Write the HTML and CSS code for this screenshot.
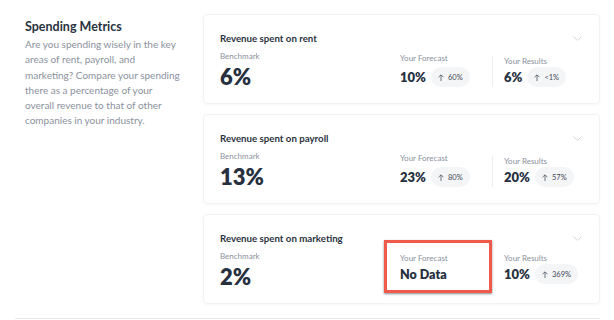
FILE: index.html
```html
<!DOCTYPE html>
<html lang="en">
<head>
  <meta charset="UTF-8">
  <meta name="viewport" content="width=device-width, initial-scale=1.0">
  <title>Spending Metrics</title>
  <link rel="stylesheet" href="styles.css">
</head>
<body>
  <main class="metrics">
    <aside class="intro">
      <h2>Spending Metrics</h2>
      <p>Are you spending wisely in the key areas of rent, payroll, and marketing? Compare your spending there as a percentage of your overall revenue to that of other companies in your industry.</p>
    </aside>

    <section class="cards">
      <div class="card">
        <div class="card-head">
          <h3>Revenue spent on rent</h3>
          <svg class="chevron" width="9" height="5" viewBox="0 0 9 5"><path d="M0.5 0.5 L4.5 4.5 L8.5 0.5" fill="none" stroke="#d3d7dd" stroke-width="1"/></svg>
        </div>
        <div class="card-body">
          <div class="bench">
            <div class="label">Benchmark</div>
            <div class="big">6%</div>
          </div>
          <div class="forecast">
            <div class="label">Your Forecast</div>
            <div class="row"><span class="val">10%</span><span class="pill"><svg width="6" height="7" viewBox="0 0 6 7"><path d="M3 7 V1 M0.6 3.2 L3 0.8 L5.4 3.2" fill="none" stroke="#4a5160" stroke-width="0.8"/></svg>60%</span></div>
          </div>
          <div class="results">
            <div class="label">Your Results</div>
            <div class="row"><span class="val">6%</span><span class="pill"><svg width="6" height="7" viewBox="0 0 6 7"><path d="M3 7 V1 M0.6 3.2 L3 0.8 L5.4 3.2" fill="none" stroke="#4a5160" stroke-width="0.8"/></svg>&lt;1%</span></div>
          </div>
        </div>
      </div>

      <div class="card">
        <div class="card-head">
          <h3>Revenue spent on payroll</h3>
          <svg class="chevron" width="9" height="5" viewBox="0 0 9 5"><path d="M0.5 0.5 L4.5 4.5 L8.5 0.5" fill="none" stroke="#d3d7dd" stroke-width="1"/></svg>
        </div>
        <div class="card-body">
          <div class="bench">
            <div class="label">Benchmark</div>
            <div class="big">13%</div>
          </div>
          <div class="forecast">
            <div class="label">Your Forecast</div>
            <div class="row"><span class="val">23%</span><span class="pill"><svg width="6" height="7" viewBox="0 0 6 7"><path d="M3 7 V1 M0.6 3.2 L3 0.8 L5.4 3.2" fill="none" stroke="#4a5160" stroke-width="0.8"/></svg>80%</span></div>
          </div>
          <div class="results">
            <div class="label">Your Results</div>
            <div class="row"><span class="val">20%</span><span class="pill"><svg width="6" height="7" viewBox="0 0 6 7"><path d="M3 7 V1 M0.6 3.2 L3 0.8 L5.4 3.2" fill="none" stroke="#4a5160" stroke-width="0.8"/></svg>57%</span></div>
          </div>
        </div>
      </div>

      <div class="card">
        <div class="card-head">
          <h3>Revenue spent on marketing</h3>
          <svg class="chevron" width="9" height="5" viewBox="0 0 9 5"><path d="M0.5 0.5 L4.5 4.5 L8.5 0.5" fill="none" stroke="#d3d7dd" stroke-width="1"/></svg>
        </div>
        <div class="card-body">
          <div class="bench">
            <div class="label">Benchmark</div>
            <div class="big">2%</div>
          </div>
          <div class="forecast highlight">
            <div class="label">Your Forecast</div>
            <div class="row"><span class="val nodata">No Data</span></div>
          </div>
          <div class="results no-divider">
            <div class="label">Your Results</div>
            <div class="row"><span class="val">10%</span><span class="pill"><svg width="6" height="7" viewBox="0 0 6 7"><path d="M3 7 V1 M0.6 3.2 L3 0.8 L5.4 3.2" fill="none" stroke="#4a5160" stroke-width="0.8"/></svg>369%</span></div>
          </div>
        </div>
      </div>
    </section>
  </main>
  <hr class="rule">
</body>
</html>
```

FILE: styles.css
```css
body {
  margin: 0;
  background-color: #ffffff;
  color: #293241;
  font-family: Lato, "Noto Sans", sans-serif;
}
.metrics {
  display: grid;
  grid-template-columns: 157px 397px;
  column-gap: 21px;
  padding: 14px 0 0 25px;
}
.intro h2 {
  margin: 5px 0 0;
  font-size: 12.5px;
  font-weight: 700;
  line-height: 15px;
  color: #293241;
}
.intro p {
  margin: 3px 0 0;
  font-size: 10px;
  line-height: 15.3px;
  color: #8b919d;
}
.cards {
  display: flex;
  flex-direction: column;
  gap: 10px;
}
.card {
  height: 90px;
  box-sizing: border-box;
  border: 1px solid #f1f2f4;
  border-radius: 4px;
  box-shadow: 0 1px 3px rgba(0, 0, 0, 0.04);
  padding: 17px 14px 0 16px;
}
.card-head {
  display: flex;
  justify-content: space-between;
  align-items: center;
  height: 12px;
}
.card-head h3 {
  margin: 0;
  font-size: 9.7px;
  font-weight: 700;
  color: #2b3240;
}
.chevron {
  margin-right: 3px;
}
.card-body {
  display: flex;
  align-items: flex-start;
}
.label {
  font-size: 8px;
  line-height: 11px;
  color: #8a909c;
}
.bench {
  flex: 1;
  margin-top: 7px;
}
.big {
  margin-top: 3px;
  font-size: 22px;
  font-weight: 800;
  line-height: 24px;
  color: #27303f;
}
.forecast {
  width: 108px;
  box-sizing: border-box;
  margin-top: -4px;
  padding: 10px 13px 7px;
  border: 3px solid transparent;
}
.forecast.highlight {
  border-color: #f05a4b;
  box-shadow: 0 1px 2px rgba(40, 40, 60, 0.55);
}
.row {
  display: flex;
  align-items: center;
  gap: 5px;
  margin-top: 3px;
}
.val {
  font-size: 13px;
  font-weight: 800;
  line-height: 16px;
  color: #27303f;
}
.nodata {
  font-size: 12.5px;
}
.pill {
  display: inline-flex;
  align-items: center;
  gap: 4px;
  height: 20px;
  padding: 0 7px;
  border-radius: 10px;
  background-color: #f4f5f7;
  font-size: 7.5px;
  color: #3f4655;
}
.results {
  width: 93px;
  box-sizing: border-box;
  margin-top: 12px;
  padding-left: 11px;
  border-left: 1px solid #eceef1;
}
.results .row {
  margin-top: 0;
}
.results.no-divider {
  border-left-color: transparent;
  margin-top: 9px;
}
.rule {
  margin: 14px 14px 0 15px;
  border: none;
  border-top: 1px solid #e9eaec;
}
```
